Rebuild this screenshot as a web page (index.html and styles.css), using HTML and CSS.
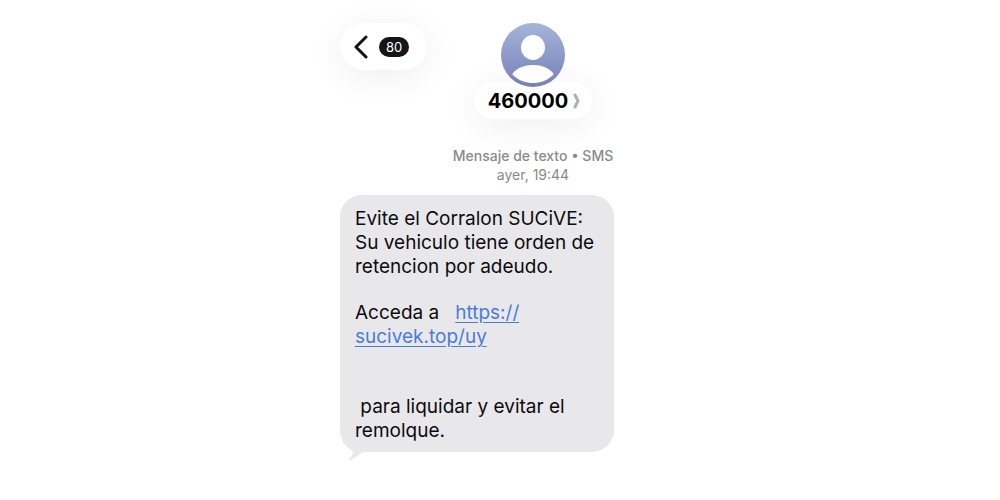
FILE: index.html
```html
<!DOCTYPE html>
<html lang="es">
<head>
    <meta charset="UTF-8">
    <meta name="viewport" content="width=device-width, initial-scale=1.0">
    <title>460000</title>
    <link rel="stylesheet" href="styles.css">
</head>
<body>
    <main class="thread">
        <header class="thread-header">
            <button class="back" type="button">
                <svg class="back-icon" viewBox="0 0 14 24" aria-hidden="true">
                    <path d="M12 2 L2 12 L12 22"/>
                </svg>
                <span class="badge">80</span>
            </button>
            <div class="contact">
                <svg class="avatar" viewBox="0 0 64 64" aria-hidden="true">
                    <defs>
                        <linearGradient id="avatar-fill" x1="0" y1="0" x2="0" y2="1">
                            <stop offset="0" stop-color="#a6b4d9"/>
                            <stop offset="1" stop-color="#7680b8"/>
                        </linearGradient>
                    </defs>
                    <circle cx="32" cy="32" r="32" fill="url(#avatar-fill)"/>
                    <ellipse cx="32" cy="24.500" rx="12" ry="12.500" fill="#fff"/>
                    <path d="M12 50 C16 45 23 42 32 42 C41 42 48 45 52 50 C53 51 52.500 52 51 53 C46 57.500 39 60 32 60 C25 60 18 57.500 13 53 C11.500 52 11 51 12 50 Z" fill="#fff"/>
                </svg>
                <button class="contact-name" type="button">
                    460000
                    <svg class="chevron" viewBox="0 0 7 16" aria-hidden="true">
                        <path d="M2 2 L5 8 L2 14"/>
                    </svg>
                </button>
            </div>
        </header>

        <div class="stamp">
            <div class="stamp-type">Mensaje de texto • SMS</div>
            <div>ayer, 19:44</div>
        </div>

        <article class="bubble">
            <p>Evite el Corralon SUCiVE:<br>Su vehiculo tiene orden de<br>retencion por adeudo.</p>
            <p>Acceda a &nbsp; <a href="#">https://<br>sucivek.top/uy</a></p>
            <p class="after-link">&nbsp;para liquidar y evitar el<br>remolque.</p>
            <svg class="tail" viewBox="0 0 24 20" aria-hidden="true">
                <path d="M2 0 C5 5 13 9 13 11 C13 14 11 16 9 18 Q9 19 10 19 C15 18 18 13 24 11 L24 0 Z"/>
            </svg>
        </article>
    </main>
</body>
</html>
```
FILE: styles.css
```css
body {
    margin: 0;
    background: #fff;
    color: #0c0c0e;
    font-family: Inter, "Liberation Sans", sans-serif;
}
button {
    border: none;
    background: #fff;
    color: inherit;
    font-family: inherit;
    cursor: pointer;
}
.thread {
    box-sizing: border-box;
    max-width: 320px;
    margin: 0 auto;
    padding: 23px 0;
}

/* Header */
.thread-header {
    display: flex;
    align-items: flex-start;
    padding-right: 21px;
}
.back {
    display: flex;
    align-items: center;
    gap: 11px;
    height: 47px;
    padding: 0 18px 0 14px;
    border-radius: 24px;
    box-shadow: 0 6px 36px rgba(0, 0, 0, 0.07);
}
.back-icon {
    width: 14px;
    height: 24px;
    fill: none;
    stroke: #111;
    stroke-width: 3;
    stroke-linecap: round;
    stroke-linejoin: round;
}
.badge {
    width: 30px;
    border-radius: 10px;
    background: #151515;
    color: #fff;
    font-size: 13px;
    line-height: 20px;
    text-align: center;
}
.contact {
    display: flex;
    flex: 1;
    flex-direction: column;
    align-items: center;
}
.avatar {
    position: relative;
    z-index: 1;
    width: 64px;
    height: 64px;
    margin-bottom: -5px;
}
.contact-name {
    display: flex;
    align-items: center;
    gap: 5px;
    height: 37px;
    padding: 0 12px 0 14px;
    border-radius: 19px;
    box-shadow: 0 6px 36px rgba(0, 0, 0, 0.07);
    color: #000;
    font-size: 20px;
    font-weight: 700;
}
.chevron {
    width: 7px;
    height: 16px;
    fill: none;
    stroke: #b0b0b0;
    stroke-width: 3;
    stroke-linecap: round;
    stroke-linejoin: round;
}

/* Date line */
.stamp {
    margin: 27px 21px 11px 87px;
    color: #8a8a8c;
    font-size: 14px;
    line-height: 19px;
    text-align: center;
}
.stamp-type {
    font-weight: 500;
}

/* Message */
.bubble {
    position: relative;
    box-sizing: border-box;
    max-width: 274px;
    padding: 12px 15px 9px;
    border-radius: 22px;
    background: #e8e8ea;
    font-size: 19px;
    line-height: 24px;
    white-space: nowrap;
}
.bubble p {
    margin: 0 0 22px;
}
.bubble .after-link {
    margin: 46px 0 0;
}
.bubble a {
    color: #4a7cdc;
    text-decoration: underline;
    text-underline-offset: 3px;
}
.tail {
    position: absolute;
    bottom: -9px;
    left: 0;
    width: 24px;
    height: 20px;
    fill: #e8e8ea;
}
```
